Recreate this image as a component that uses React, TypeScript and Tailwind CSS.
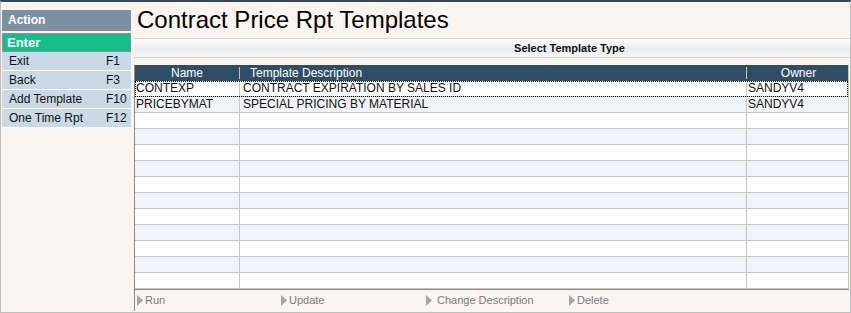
import React from 'react';

const actions = [
    { label: 'Exit', key: 'F1' },
    { label: 'Back', key: 'F3' },
    { label: 'Add Template', key: 'F10' },
    { label: 'One Time Rpt', key: 'F12' },
];

const rows = [
    { name: 'CONTEXP', desc: 'CONTRACT EXPIRATION BY SALES ID', owner: 'SANDYV4' },
    { name: 'PRICEBYMAT', desc: 'SPECIAL PRICING BY MATERIAL', owner: 'SANDYV4' },
];

const footerLinks = [
    { label: 'Run', w: 'w-[144px]' },
    { label: 'Update', w: 'w-[145px]' },
    { label: 'Change Description', w: 'w-[143px]' },
    { label: 'Delete', w: 'w-[100px]' },
];

const Arrow = () => (
    <svg width="6" height="11" viewBox="0 0 6 11" className="shrink-0">
        <polygon points="0,0 6,5.5 0,11" fill="#a6a6a6" />
    </svg>
);

const App: React.FC = () => {
    const allRows = Array.from({ length: 13 }, (_, i) => rows[i] || { name: '', desc: '', owner: '' });

    return (
        <div className="w-[851px] h-[313px] bg-[#fcf4ee] border-t-2 border-t-[#34495b] border-l border-r border-b border-[#bdbdbd] flex font-['Liberation_Sans',Arial,sans-serif] overflow-hidden">
            {/* left action menu */}
            <div className="w-[129px] ml-[1px] mt-[8px] shrink-0">
                <div className="h-[21px] bg-[#7b90a3] text-white text-[12px] font-bold pl-[6px] leading-[21px]">Action</div>
                <div className="mt-[2px] h-[19px] bg-[#14bf8c] border border-[#8e8e8e] text-white text-[13px] font-bold pl-[4px] leading-[17px]">Enter</div>
                {actions.map((a) => (
                    <div key={a.label} className="h-[19px] bg-[#c9d9e7] border-b border-white flex justify-between items-center pl-[7px] pr-[4px] text-[12px] text-[#111]">
                        <span>{a.label}</span>
                        <span className="w-[21px]">{a.key}</span>
                    </div>
                ))}
            </div>

            {/* main */}
            <div className="ml-[3px] flex-1 flex flex-col min-w-0">
                <div className="h-[34px] pl-[3px] pt-[5px] text-[24px] leading-[26px] text-black">Contract Price Rpt Templates</div>
                <div className="mt-[2px] h-[20px] border-t border-b border-[#d4d2c6] bg-gradient-to-b from-[#ffffff] via-[#ececec] to-[#f4f4f4] text-center text-[11px] font-bold text-[#111] leading-[18px] pl-[155px]">
                    Select Template Type
                </div>
                <div className="mt-[7px] mr-[1px] border-l border-[#8a8a8a] border-r border-r-[#c8c8b4]">
                    <div className="h-[16px] bg-[#2f4e65] grid grid-cols-[105px_507px_1fr] text-white text-[12px] leading-[16px]">
                        <div className="text-center border-r border-[#c7c7b6] my-[2px] leading-[12px]">Name</div>
                        <div className="pl-[10px] border-r border-[#c7c7b6] my-[2px] leading-[12px]">Template Description</div>
                        <div className="text-center leading-[16px] pl-[2px]">Owner</div>
                    </div>
                    {allRows.map((r, i) => (
                        <div
                            key={i}
                            className={
                                'h-[16px] grid grid-cols-[105px_507px_1fr] text-[12px] text-[#111] leading-[15px] border-b border-[#c8c8ba] ' +
                                (i % 2 === 1 ? 'bg-[#eff4fa] ' : 'bg-white ') +
                                (i === 0 ? 'outline-1 outline-dotted outline-black -outline-offset-1' : '')
                            }
                        >
                            <div className="border-r border-[#c8c8ba] pl-[1px] truncate">{r.name}</div>
                            <div className="border-r border-[#c8c8ba] pl-[3px] truncate">{r.desc}</div>
                            <div className="pl-[1px] truncate">{r.owner}</div>
                        </div>
                    ))}
                </div>
                <div className="h-[22px] mr-[1px] border-l border-t border-[#8a8a8a] flex items-center pl-[2px] text-[11px] text-[#7a7a7a]">
                    {footerLinks.map((f) => (
                        <div key={f.label} className={'flex items-center gap-[2px] ' + f.w}>
                            <Arrow />
                            <span className={f.label === 'Change Description' ? 'ml-[3px]' : ''}>{f.label}</span>
                        </div>
                    ))}
                </div>
            </div>
        </div>
    );
};

export default App;
